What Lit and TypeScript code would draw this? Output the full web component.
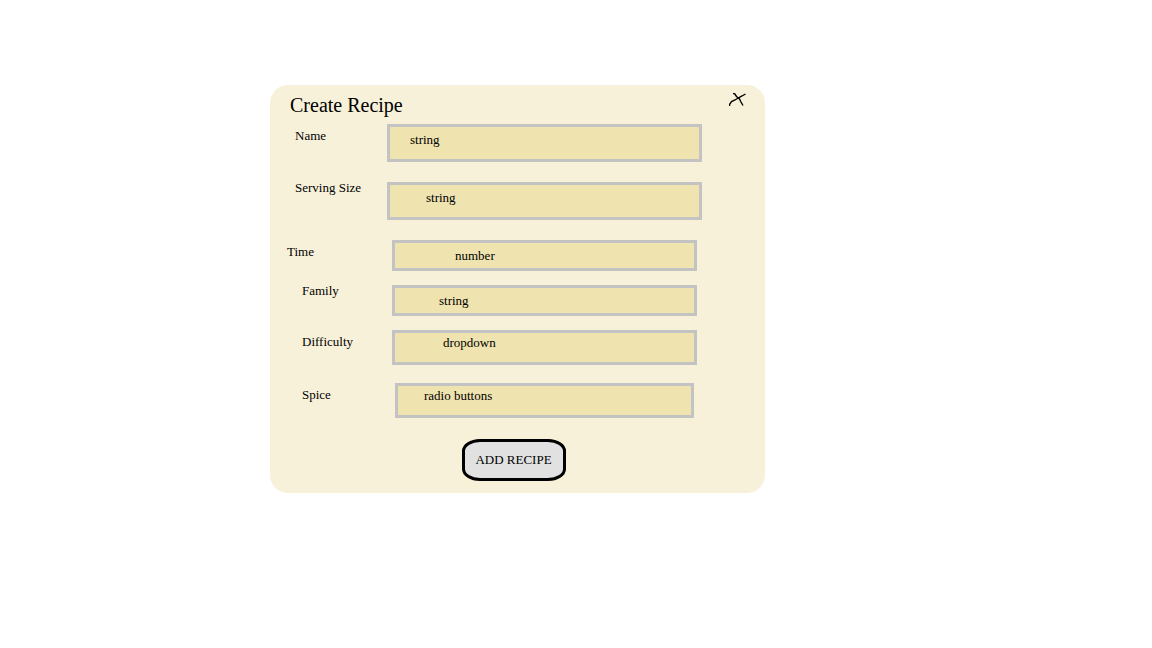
import { LitElement, html, css } from "lit";
import { customElement } from "lit/decorators.js";
import { classMap } from "lit/directives/class-map.js";

interface Field {
  id: string;
  label: string;
  hint: string;
  kind: "text" | "number" | "select";
  classes: string[];
}

const FIELDS: Field[] = [
  { id: "name", label: "Name", hint: "string", kind: "text", classes: ["label-in", "label-low", "tall", "pad-20"] },
  { id: "serving", label: "Serving Size", hint: "string", kind: "text", classes: ["label-in", "tall", "pad-36"] },
  { id: "time", label: "Time", hint: "number", kind: "number", classes: ["label-low", "inset", "short", "pad-60"] },
  { id: "family", label: "Family", hint: "string", kind: "text", classes: ["label-far", "inset", "short", "pad-44"] },
  { id: "difficulty", label: "Difficulty", hint: "dropdown", kind: "select", classes: ["label-far", "label-low", "inset", "medium", "pad-48"] },
  { id: "spice", label: "Spice", hint: "radio buttons", kind: "text", classes: ["label-far", "label-low", "narrow", "medium", "pad-26"] },
];

@customElement("app-root")
export class AppRoot extends LitElement {
  static styles = css`
    :host {
      display: block;
      min-height: 100vh;
      background: #ffffff;
      color: #000000;
      font-family: "Liberation Serif", serif;
      font-size: 13px;
    }
    .page {
      display: grid;
      grid-template-columns: 270fr 495fr 387fr;
      padding: 85px 0;
    }
    .panel {
      grid-column: 2;
      box-sizing: border-box;
      padding: 8px 0 12px;
      border-radius: 18px;
      background: #f8f1da;
    }
    .head {
      display: flex;
      justify-content: space-between;
      align-items: flex-start;
      padding: 0 19px 7px 20px;
    }
    .title {
      margin: 0;
      font-size: 20px;
      line-height: 24px;
      font-weight: 400;
    }
    .close {
      padding: 0;
      border: 0;
      background: none;
      line-height: 0;
      cursor: pointer;
    }
    .fields {
      padding: 0 63px 0 17px;
    }
    .row {
      display: grid;
      grid-template-columns: 100px 1fr;
      align-items: start;
    }
    .tall {
      margin-bottom: 20px;
    }
    .short {
      margin-bottom: 14px;
    }
    .medium {
      margin-bottom: 18px;
    }
    .label {
      line-height: 12px;
    }
    .label-in .label {
      padding-left: 8px;
    }
    .label-far .label {
      padding-left: 15px;
    }
    .label-low .label {
      padding-top: 6px;
    }
    .control {
      display: block;
      box-sizing: border-box;
      width: 100%;
      margin: 0;
      border: 3px solid #c3c3c3;
      border-radius: 0;
      background: #efe3af;
      color: #000000;
      font: inherit;
      line-height: 16px;
      appearance: none;
      -moz-appearance: textfield;
    }
    .control::placeholder {
      color: #000000;
      opacity: 1;
    }
    .inset .slot {
      padding: 0 5px;
    }
    .narrow .slot {
      padding: 0 8px;
    }
    .tall .control {
      height: 38px;
      padding: 0 0 6px;
    }
    .medium .control {
      height: 35px;
      padding: 0 0 10px;
    }
    .short .control {
      height: 31px;
      padding: 0;
    }
    .pad-20 .control {
      padding-left: 20px;
    }
    .pad-26 .control {
      padding-left: 26px;
    }
    .pad-36 .control {
      padding-left: 36px;
    }
    .pad-44 .control {
      padding-left: 44px;
    }
    .pad-48 .control {
      padding-left: 48px;
    }
    .pad-60 .control {
      padding-left: 60px;
    }
    .actions {
      display: flex;
      justify-content: center;
      padding: 3px 8px 0 0;
    }
    .add {
      box-sizing: border-box;
      min-width: 104px;
      height: 42px;
      padding: 0 8px;
      border: 3px solid #000000;
      border-radius: 18px / 12px;
      background: #e1e1e1;
      color: #000000;
      font: inherit;
      white-space: nowrap;
      cursor: pointer;
    }
  `;

  private control(f: Field) {
    if (f.kind === "select") {
      return html`<select class="control" id=${f.id}><option>${f.hint}</option></select>`;
    }
    return html`<input class="control" id=${f.id} type=${f.kind} placeholder=${f.hint} />`;
  }

  render() {
    return html`
      <main class="page">
        <section class="panel" aria-labelledby="title">
          <header class="head">
            <h1 class="title" id="title">Create Recipe</h1>
            <button class="close" type="button" aria-label="Close">
              <svg width="17" height="14" viewBox="0 0 17 14" fill="none" stroke="#000" stroke-width="1.4">
                <path d="M.5 13V11.500L2.500 8.500L6 7L10 4.500L13 3L16.500 1" />
                <path d="M4 .5H5.500L7.500 3.500L10.500 6L12 9L14 12.500" />
              </svg>
            </button>
          </header>
          <form @submit=${(e: Event) => e.preventDefault()}>
            <div class="fields">
              ${FIELDS.map(
                (f) => html`
                  <div class="row ${classMap(Object.fromEntries(f.classes.map((c) => [c, true])))}">
                    <label class="label" for=${f.id}>${f.label}</label>
                    <div class="slot">${this.control(f)}</div>
                  </div>
                `
              )}
            </div>
            <div class="actions">
              <button class="add" type="submit">ADD RECIPE</button>
            </div>
          </form>
        </section>
      </main>
    `;
  }
}
